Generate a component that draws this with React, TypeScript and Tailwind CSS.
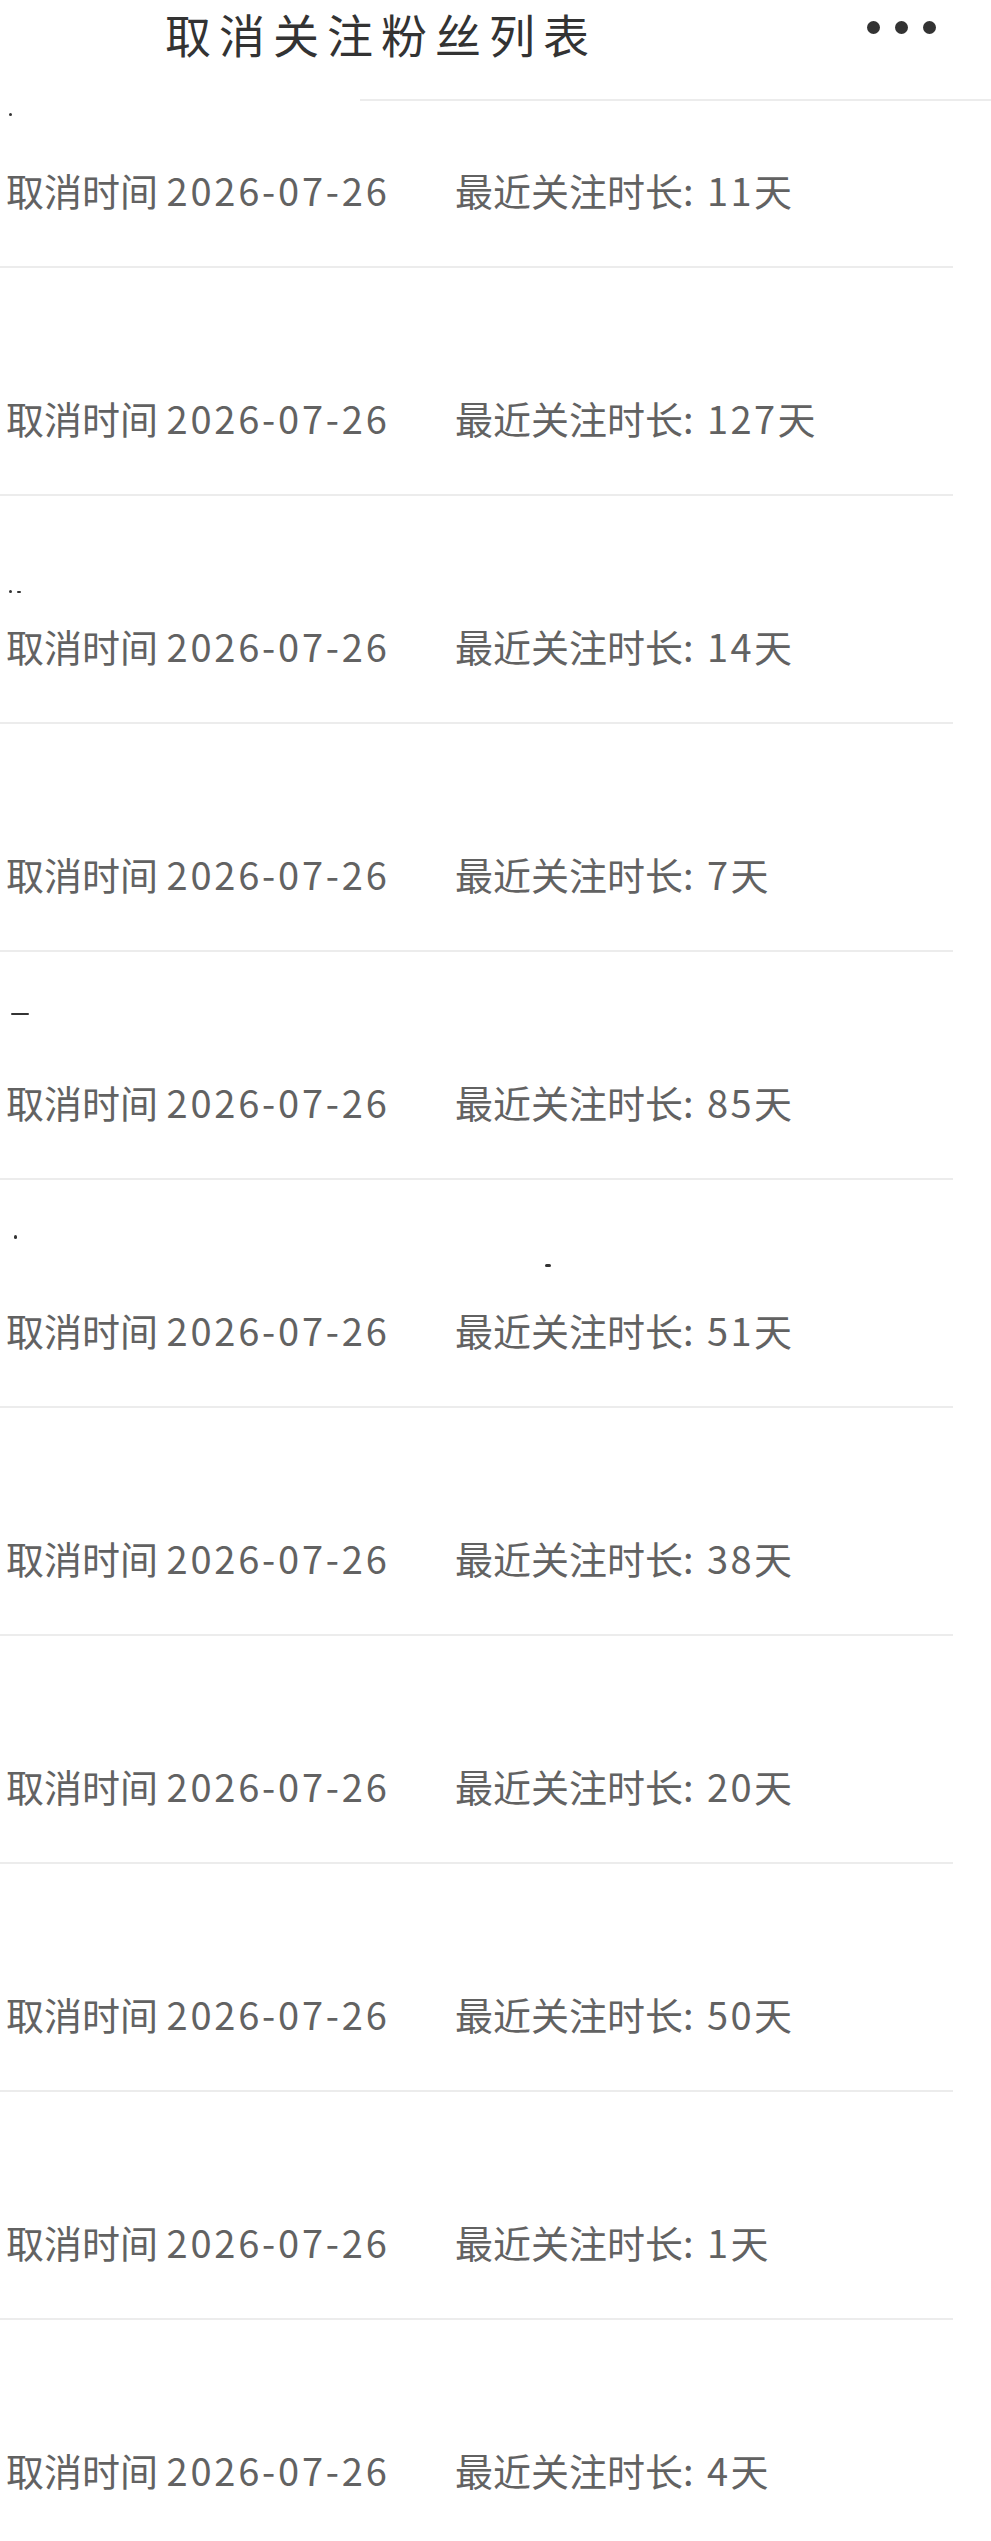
type Mark = { x: number; y: number; w: number; h: number };

type Fan = {
  id: number;
  cancelled: string;
  days: number;
  marks?: Mark[];
};

const fans: Fan[] = [
  { id: 1, cancelled: "2026-07-26", days: 11, marks: [{ x: 9, y: 73, w: 3, h: 3 }] },
  { id: 2, cancelled: "2026-07-26", days: 127 },
  {
    id: 3,
    cancelled: "2026-07-26",
    days: 14,
    marks: [
      { x: 9, y: 94, w: 3, h: 3 },
      { x: 17, y: 95, w: 4, h: 2 },
    ],
  },
  { id: 4, cancelled: "2026-07-26", days: 7 },
  { id: 5, cancelled: "2026-07-26", days: 85, marks: [{ x: 11, y: 61, w: 18, h: 2 }] },
  {
    id: 6,
    cancelled: "2026-07-26",
    days: 51,
    marks: [
      { x: 14, y: 55, w: 3, h: 4 },
      { x: 545, y: 84, w: 6, h: 3 },
    ],
  },
  { id: 7, cancelled: "2026-07-26", days: 38 },
  { id: 8, cancelled: "2026-07-26", days: 20 },
  { id: 9, cancelled: "2026-07-26", days: 50 },
  { id: 10, cancelled: "2026-07-26", days: 1 },
  { id: 11, cancelled: "2026-07-26", days: 4 },
];

const font = { fontFamily: '"Noto Sans CJK SC", "Noto Sans", sans-serif' };

function FanRow({ fan }: { fan: Fan }) {
  return (
    <div className="mr-[38px] flex h-[228px] flex-col border-b-2 border-[#ececec]">
      {/* blank avatar / nickname area, a few stray marks left over */}
      <div className="relative h-[125px]">
        {fan.marks?.map((m, i) => (
          <span
            key={i}
            className="absolute rounded-full bg-[#333]"
            style={{ left: m.x, top: m.y, width: m.w, height: m.h }}
          />
        ))}
      </div>
      <div className="flex h-[50px] items-center pl-[6px] text-[38px] leading-[50px] text-[#626262]">
        <span className="w-[449px] shrink-0">
          取消时间 <span className="tracking-[2.8px]">{fan.cancelled}</span>
        </span>
        <span>
          最近关注时长<span className="tracking-[2.4px]">: {fan.days}</span>天
        </span>
      </div>
    </div>
  );
}

export default function App() {
  return (
    <div className="min-h-screen w-[991px] overflow-hidden bg-white" style={font}>
      <header className="sticky top-0 z-10 flex h-[101px] items-start bg-white">
        <div className="flex h-[100px] w-full items-start">
          <h1 className="pl-[165px] text-[46px] leading-[66px] tracking-[8px] text-[#333]">
            取消关注粉丝列表
          </h1>
          <div className="ml-auto mr-[55px] mt-[21px] flex items-center gap-[15px]">
            <span className="h-[13px] w-[13px] rounded-full bg-[#333]" />
            <span className="h-[13px] w-[13px] rounded-full bg-[#333]" />
            <span className="h-[13px] w-[13px] rounded-full bg-[#333]" />
          </div>
        </div>
        <div className="absolute bottom-0 left-[360px] right-0 h-[2px] bg-[#ececec]" />
      </header>

      <main className="-mt-[61px]">
        {fans.map((f) => (
          <FanRow key={f.id} fan={f} />
        ))}
      </main>
    </div>
  );
}
